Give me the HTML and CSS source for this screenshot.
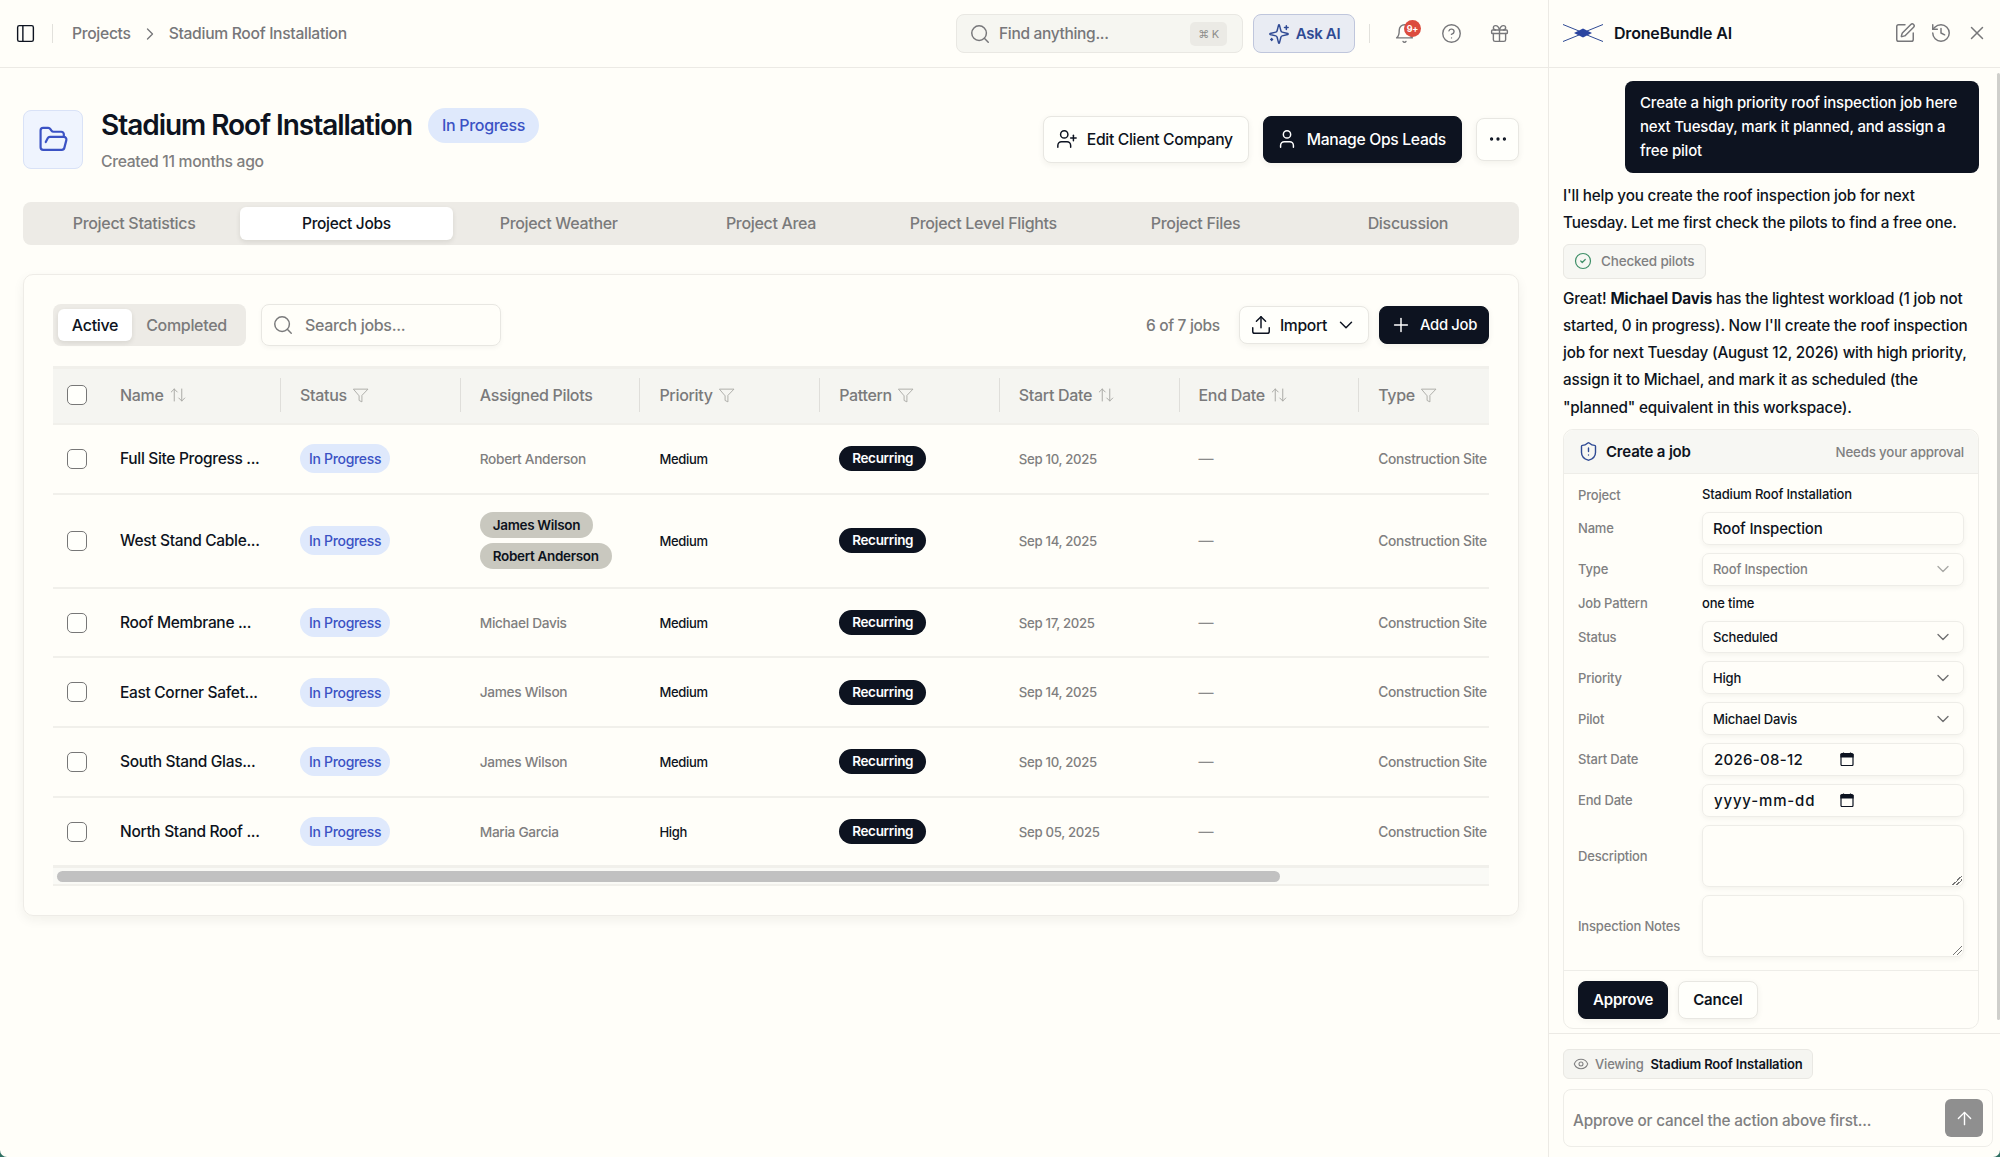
FILE: index.html
```html
<!DOCTYPE html>
<html lang="en">

<head>
    <meta charset="UTF-8">
    <title>Stadium Roof Installation</title>
    <link rel="stylesheet" href="styles.css">
</head>

<body>
    <svg class="sprite" xmlns="http://www.w3.org/2000/svg">
        <symbol id="i-panel" viewBox="0 0 24 24"><rect x="3" y="3" width="18" height="18" rx="2"/><path d="M9 3v18"/></symbol>
        <symbol id="i-chev-r" viewBox="0 0 24 24"><path d="m9 18 6-6-6-6"/></symbol>
        <symbol id="i-chev-d" viewBox="0 0 24 24"><path d="m6 9 6 6 6-6"/></symbol>
        <symbol id="i-search" viewBox="0 0 24 24"><circle cx="11" cy="11" r="8"/><path d="m21 21-4.3-4.3"/></symbol>
        <symbol id="i-sparkles" viewBox="0 0 24 24"><path d="M9.937 15.5A2 2 0 0 0 8.5 14.063l-6.135-1.582a.5.5 0 0 1 0-.962L8.5 9.936A2 2 0 0 0 9.937 8.5l1.582-6.135a.5.5 0 0 1 .963 0L14.063 8.5A2 2 0 0 0 15.5 9.937l6.135 1.581a.5.5 0 0 1 0 .964L15.5 14.063a2 2 0 0 0-1.437 1.437l-1.582 6.135a.5.5 0 0 1-.963 0z"/><path d="M20 3v4"/><path d="M22 5h-4"/><path d="M4 17v2"/><path d="M5 18H3"/></symbol>
        <symbol id="i-bell" viewBox="0 0 24 24"><path d="M6 8a6 6 0 0 1 12 0c0 7 3 9 3 9H3s3-2 3-9"/><path d="M10.3 21a1.94 1.94 0 0 0 3.4 0"/></symbol>
        <symbol id="i-help" viewBox="0 0 24 24"><circle cx="12" cy="12" r="10"/><path d="M9.09 9a3 3 0 0 1 5.83 1c0 2-3 3-3 3"/><path d="M12 17h.01"/></symbol>
        <symbol id="i-gift" viewBox="0 0 24 24"><rect x="3" y="8" width="18" height="4" rx="1"/><path d="M12 8v13"/><path d="M19 12v7a2 2 0 0 1-2 2H7a2 2 0 0 1-2-2v-7"/><path d="M7.5 8a2.5 2.5 0 0 1 0-5A4.8 8 0 0 1 12 8a4.8 8 0 0 1 4.5-5 2.5 2.5 0 0 1 0 5"/></symbol>
        <symbol id="i-folder" viewBox="0 0 24 24"><path d="m6 14 1.5-2.9A2 2 0 0 1 9.24 10H20a2 2 0 0 1 1.94 2.5l-1.54 6a2 2 0 0 1-1.95 1.5H4a2 2 0 0 1-2-2V5a2 2 0 0 1 2-2h3.9a2 2 0 0 1 1.69.9l.81 1.2a2 2 0 0 0 1.67.9H18a2 2 0 0 1 2 2v2"/></symbol>
        <symbol id="i-user-plus" viewBox="0 0 24 24"><path d="M16 21v-2a4 4 0 0 0-4-4H6a4 4 0 0 0-4 4v2"/><circle cx="9" cy="7" r="4"/><path d="M19 8v6"/><path d="M22 11h-6"/></symbol>
        <symbol id="i-user" viewBox="0 0 24 24"><path d="M19 21v-2a4 4 0 0 0-4-4H9a4 4 0 0 0-4 4v2"/><circle cx="12" cy="7" r="4"/></symbol>
        <symbol id="i-dots" viewBox="0 0 24 24"><circle cx="12" cy="12" r="1"/><circle cx="19" cy="12" r="1"/><circle cx="5" cy="12" r="1"/></symbol>
        <symbol id="i-upload" viewBox="0 0 24 24"><path d="M21 15v4a2 2 0 0 1-2 2H5a2 2 0 0 1-2-2v-4"/><path d="m17 8-5-5-5 5"/><path d="M12 3v12"/></symbol>
        <symbol id="i-plus" viewBox="0 0 24 24"><path d="M5 12h14"/><path d="M12 5v14"/></symbol>
        <symbol id="i-sort" viewBox="0 0 24 24"><path d="m21 16-4 4-4-4"/><path d="M17 20V4"/><path d="m3 8 4-4 4 4"/><path d="M7 4v16"/></symbol>
        <symbol id="i-filter" viewBox="0 0 24 24"><path d="M22 3H2l8 9.46V19l4 2v-8.54z"/></symbol>
        <symbol id="i-pen" viewBox="0 0 24 24"><path d="M12 3H5a2 2 0 0 0-2 2v14a2 2 0 0 0 2 2h14a2 2 0 0 0 2-2v-7"/><path d="M18.375 2.625a1 1 0 0 1 3 3l-9.013 9.014a2 2 0 0 1-.853.505l-2.873.84a.5.5 0 0 1-.62-.62l.84-2.873a2 2 0 0 1 .506-.852z"/></symbol>
        <symbol id="i-history" viewBox="0 0 24 24"><path d="M3 12a9 9 0 1 0 9-9 9.75 9.75 0 0 0-6.74 2.74L3 8"/><path d="M3 3v5h5"/><path d="M12 7v5l4 2"/></symbol>
        <symbol id="i-x" viewBox="0 0 24 24"><path d="M18 6 6 18"/><path d="m6 6 12 12"/></symbol>
        <symbol id="i-check" viewBox="0 0 24 24"><circle cx="12" cy="12" r="10"/><path d="m9 12 2 2 4-4"/></symbol>
        <symbol id="i-shield" viewBox="0 0 24 24"><path d="M20 13c0 5-3.5 7.5-7.66 8.95a1 1 0 0 1-.67-.01C7.5 20.5 4 18 4 13V6a1 1 0 0 1 1-1c2 0 4.5-1.2 6.24-2.72a1.17 1.17 0 0 1 1.52 0C14.51 3.81 17 5 19 5a1 1 0 0 1 1 1z"/><path d="M12 8v4"/><path d="M12 16h.01"/></symbol>
        <symbol id="i-eye" viewBox="0 0 24 24"><path d="M2.062 12.348a1 1 0 0 1 0-.696 10.75 10.75 0 0 1 19.876 0 1 1 0 0 1 0 .696 10.75 10.75 0 0 1-19.876 0"/><circle cx="12" cy="12" r="3"/></symbol>
        <symbol id="i-arrow-up" viewBox="0 0 24 24"><path d="m5 12 7-7 7 7"/><path d="M12 19V5"/></symbol>
        <symbol id="i-calendar" viewBox="0 0 14 14"><path d="M2 1.500h10a1 1 0 0 1 1 1v10a1 1 0 0 1-1 1H2a1 1 0 0 1-1-1v-10a1 1 0 0 1 1-1z"/><path class="cal-top" d="M1 2.500h12v2.500H1z"/><path d="M3.500 .5v1.500M10.500 .5v1.500"/></symbol>
    </svg>

    <main class="main">
        <header class="topbar">
            <svg class="icon icon-21 dark"><use href="#i-panel"/></svg>
            <span class="topbar-sep"></span>
            <nav class="crumbs">
                <span>Projects</span>
                <svg class="icon icon-20"><use href="#i-chev-r"/></svg>
                <span>Stadium Roof Installation</span>
            </nav>
            <div class="find">
                <svg class="icon icon-22"><use href="#i-search"/></svg>
                <span class="find-text">Find anything...</span>
                <kbd class="kbd">⌘ K</kbd>
            </div>
            <button class="ask-ai"><svg class="icon icon-22"><use href="#i-sparkles"/></svg>Ask AI</button>
            <span class="topbar-sep sep-right"></span>
            <span class="bell">
                <svg class="icon icon-21"><use href="#i-bell"/></svg>
                <span class="bell-count">9+</span>
            </span>
            <svg class="icon icon-21 top-help"><use href="#i-help"/></svg>
            <svg class="icon icon-21 top-gift"><use href="#i-gift"/></svg>
        </header>

        <div class="content">
            <section class="project-head">
                <div class="project-icon"><svg class="icon icon-31"><use href="#i-folder"/></svg></div>
                <div class="project-title">
                    <div class="title-row">
                        <h1>Stadium Roof Installation</h1>
                        <span class="status-big">In Progress</span>
                    </div>
                    <p class="created">Created 11 months ago</p>
                </div>
                <div class="project-actions">
                    <button class="btn btn-light btn-lg"><svg class="icon icon-22"><use href="#i-user-plus"/></svg>Edit Client Company</button>
                    <button class="btn btn-dark btn-lg"><svg class="icon icon-22"><use href="#i-user"/></svg>Manage Ops Leads</button>
                    <button class="btn btn-light btn-more"><svg class="icon icon-22"><use href="#i-dots"/></svg></button>
                </div>
            </section>

            <nav class="tabs">
                <a>Project Statistics</a>
                <a class="active">Project Jobs</a>
                <a>Project Weather</a>
                <a>Project Area</a>
                <a>Project Level Flights</a>
                <a>Project Files</a>
                <a>Discussion</a>
            </nav>

            <section class="card">
                <div class="toolbar">
                    <div class="segment">
                        <span class="seg-on">Active</span>
                        <span class="seg-off">Completed</span>
                    </div>
                    <div class="job-search">
                        <svg class="icon icon-22"><use href="#i-search"/></svg>
                        <span>Search jobs...</span>
                    </div>
                    <span class="job-count">6 of 7 jobs</span>
                    <button class="btn btn-light btn-md"><svg class="icon icon-22"><use href="#i-upload"/></svg>Import<svg class="icon icon-22"><use href="#i-chev-d"/></svg></button>
                    <button class="btn btn-dark btn-md"><svg class="icon icon-22"><use href="#i-plus"/></svg>Add Job</button>
                </div>

                <div class="table-wrap">
                    <table class="jobs">
                        <colgroup>
                            <col class="col-name">
                            <col class="col-std" span="7">
                        </colgroup>
                        <thead>
                            <tr>
                                <th><div class="th-in th-first"><span class="check"></span>Name<svg class="icon icon-18 muted"><use href="#i-sort"/></svg></div></th>
                                <th><div class="th-in">Status<svg class="icon icon-17 muted"><use href="#i-filter"/></svg></div></th>
                                <th><div class="th-in">Assigned Pilots</div></th>
                                <th><div class="th-in">Priority<svg class="icon icon-17 muted"><use href="#i-filter"/></svg></div></th>
                                <th><div class="th-in">Pattern<svg class="icon icon-17 muted"><use href="#i-filter"/></svg></div></th>
                                <th><div class="th-in">Start Date<svg class="icon icon-18 muted"><use href="#i-sort"/></svg></div></th>
                                <th><div class="th-in">End Date<svg class="icon icon-18 muted"><use href="#i-sort"/></svg></div></th>
                                <th><div class="th-in">Type<svg class="icon icon-17 muted"><use href="#i-filter"/></svg></div></th>
                            </tr>
                        </thead>
                        <tbody>
                            <tr>
                                <td><div class="name-cell"><span class="check"></span>Full Site Progress ...</div></td>
                                <td><span class="status">In Progress</span></td>
                                <td class="pilot">Robert Anderson</td>
                                <td class="priority">Medium</td>
                                <td><span class="pattern">Recurring</span></td>
                                <td class="date">Sep 10, 2025</td>
                                <td class="dash">—</td>
                                <td class="type">Construction Site</td>
                            </tr>
                            <tr class="row-tall">
                                <td><div class="name-cell"><span class="check"></span>West Stand Cable...</div></td>
                                <td><span class="status">In Progress</span></td>
                                <td><div class="pilot-chips"><span>James Wilson</span><span>Robert Anderson</span></div></td>
                                <td class="priority">Medium</td>
                                <td><span class="pattern">Recurring</span></td>
                                <td class="date">Sep 14, 2025</td>
                                <td class="dash">—</td>
                                <td class="type">Construction Site</td>
                            </tr>
                            <tr>
                                <td><div class="name-cell"><span class="check"></span>Roof Membrane ...</div></td>
                                <td><span class="status">In Progress</span></td>
                                <td class="pilot">Michael Davis</td>
                                <td class="priority">Medium</td>
                                <td><span class="pattern">Recurring</span></td>
                                <td class="date">Sep 17, 2025</td>
                                <td class="dash">—</td>
                                <td class="type">Construction Site</td>
                            </tr>
                            <tr>
                                <td><div class="name-cell"><span class="check"></span>East Corner Safet...</div></td>
                                <td><span class="status">In Progress</span></td>
                                <td class="pilot">James Wilson</td>
                                <td class="priority">Medium</td>
                                <td><span class="pattern">Recurring</span></td>
                                <td class="date">Sep 14, 2025</td>
                                <td class="dash">—</td>
                                <td class="type">Construction Site</td>
                            </tr>
                            <tr>
                                <td><div class="name-cell"><span class="check"></span>South Stand Glas...</div></td>
                                <td><span class="status">In Progress</span></td>
                                <td class="pilot">James Wilson</td>
                                <td class="priority">Medium</td>
                                <td><span class="pattern">Recurring</span></td>
                                <td class="date">Sep 10, 2025</td>
                                <td class="dash">—</td>
                                <td class="type">Construction Site</td>
                            </tr>
                            <tr>
                                <td><div class="name-cell"><span class="check"></span>North Stand Roof ...</div></td>
                                <td><span class="status">In Progress</span></td>
                                <td class="pilot">Maria Garcia</td>
                                <td class="priority">High</td>
                                <td><span class="pattern">Recurring</span></td>
                                <td class="date">Sep 05, 2025</td>
                                <td class="dash">—</td>
                                <td class="type">Construction Site</td>
                            </tr>
                        </tbody>
                    </table>
                </div>
                <div class="hscroll"><div class="hscroll-thumb" style="width: 1223px"></div></div>
            </section>
        </div>
    </main>

    <aside class="panel">
        <header class="panel-head">
            <svg class="logo" viewBox="0 0 40 18" xmlns="http://www.w3.org/2000/svg">
                <path class="logo-line" d="M0 .5 16 7M24 11 40 17.500M0 17.500 16 11M24 7 40 .5"/>
                <path class="logo-mark" d="M11 9 20 4.500 29 9l-9 4.500z"/>
            </svg>
            <strong class="panel-title">DroneBundle AI</strong>
            <svg class="icon icon-22"><use href="#i-pen"/></svg>
            <svg class="icon icon-22"><use href="#i-history"/></svg>
            <svg class="icon icon-22"><use href="#i-x"/></svg>
        </header>

        <div class="chat">
            <div class="chat-thumb"></div>
            <div class="bubble">Create a high priority roof inspection job here next Tuesday, mark it planned, and assign a free pilot</div>
            <p class="msg">I'll help you create the roof inspection job for next Tuesday. Let me first check the pilots to find a free one.</p>
            <div class="tool-chip"><svg class="icon icon-18 green"><use href="#i-check"/></svg>Checked pilots</div>
            <p class="msg msg-2">Great! <b>Michael Davis</b> has the lightest workload (1 job not started, 0 in progress). Now I'll create the roof inspection job for next Tuesday (August 12, 2026) with high priority, assign it to Michael, and mark it as scheduled (the "planned" equivalent in this workspace).</p>

            <section class="approval">
                <header class="approval-head">
                    <svg class="icon icon-21 navy"><use href="#i-shield"/></svg>
                    <strong>Create a job</strong>
                    <span>Needs your approval</span>
                </header>
                <div class="form">
                    <label>Project</label><div class="plain">Stadium Roof Installation</div>
                    <label>Name</label><div class="field field-name">Roof Inspection</div>
                    <label>Type</label><div class="field select disabled">Roof Inspection<svg class="icon icon-20"><use href="#i-chev-d"/></svg></div>
                    <label>Job Pattern</label><div class="plain">one time</div>
                    <label>Status</label><div class="field select">Scheduled<svg class="icon icon-20"><use href="#i-chev-d"/></svg></div>
                    <label>Priority</label><div class="field select">High<svg class="icon icon-20"><use href="#i-chev-d"/></svg></div>
                    <label>Pilot</label><div class="field select">Michael Davis<svg class="icon icon-20"><use href="#i-chev-d"/></svg></div>
                    <label>Start Date</label><div class="field date-field"><span>2026-08-12</span><svg class="cal"><use href="#i-calendar"/></svg></div>
                    <label>End Date</label><div class="field date-field"><span class="date-empty">yyyy-mm-dd</span><svg class="cal"><use href="#i-calendar"/></svg></div>
                    <label>Description</label><div class="field area"></div>
                    <label>Inspection Notes</label><div class="field area"></div>
                </div>
                <footer class="approval-foot">
                    <button class="btn btn-dark btn-sm">Approve</button>
                    <button class="btn btn-light btn-sm">Cancel</button>
                </footer>
            </section>
        </div>

        <footer class="composer-wrap">
            <div class="viewing"><svg class="icon icon-16"><use href="#i-eye"/></svg><span>Viewing</span><b>Stadium Roof Installation</b></div>
            <div class="composer">
                <span class="composer-hint">Approve or cancel the action above first...</span>
                <button class="send"><svg class="icon icon-21"><use href="#i-arrow-up"/></svg></button>
            </div>
        </footer>
    </aside>
</body></html>
```

FILE: styles.css
```css
* {
    box-sizing: border-box;
}

html {
    height: 100%;
    background-color: #2f6f62;
}

body {
    display: flex;
    height: 1157px;
    margin: 0;
    overflow: hidden;
    border-radius: 0 0 7px 7px;
    background-color: #fffef9;
    color: #0d1320;
    font-family: Inter, "Noto Sans", sans-serif;
    font-size: 16px;
    letter-spacing: -0.02em;
}

button {
    font: inherit;
    letter-spacing: inherit;
    cursor: pointer;
}

.sprite {
    display: none;
}

.icon {
    flex: none;
    fill: none;
    stroke: currentColor;
    stroke-width: 1.6;
    stroke-linecap: round;
    stroke-linejoin: round;
}

.icon-16 { width: 16px; height: 16px; }
.icon-17 { width: 17px; height: 17px; }
.icon-18 { width: 18px; height: 18px; }
.icon-20 { width: 20px; height: 20px; }
.icon-21 { width: 21px; height: 21px; }
.icon-22 { width: 22px; height: 22px; }
.icon-31 { width: 31px; height: 31px; stroke-width: 1.7; }

.dark { color: #0d1320; }
.muted { color: #a9a9a5; stroke-width: 1.3; }
.green { color: #3f8f68; }
.navy { color: #2f4a94; }

/* left side */

.main {
    width: 1548px;
    flex: none;
}

.topbar {
    display: flex;
    align-items: center;
    height: 68px;
    padding: 0 38px 0 15px;
    border-bottom: 1px solid #eceae5;
    color: #77777a;
}

.topbar-sep {
    width: 1px;
    height: 19px;
    margin: 0 19px 0 16px;
    background-color: #e2e1dc;
}

.crumbs {
    display: flex;
    align-items: center;
    gap: 9px;
    font-size: 15.7px;
    font-weight: 500;
}

.find {
    display: flex;
    align-items: center;
    width: 287px;
    height: 39px;
    margin-left: auto;
    margin-right: 10px;
    padding: 0 15px 0 12px;
    border: 1px solid #e9e8e3;
    border-radius: 8px;
    background-color: #f6f6f1;
}

.find-text {
    margin-left: 8px;
    font-size: 15.5px;
    font-weight: 500;
}

.kbd {
    margin-left: auto;
    width: 37px;
    height: 24px;
    border-radius: 5px;
    background-color: #ebeae5;
    color: #8d8d8b;
    font-family: Inter, sans-serif;
    font-size: 11px;
    line-height: 24px;
    text-align: center;
}

.ask-ai {
    display: flex;
    align-items: center;
    justify-content: center;
    gap: 6px;
    width: 102px;
    height: 39px;
    border: 1px solid #bfc6dc;
    border-radius: 8px;
    background-color: #e9ecf3;
    color: #2f4a94;
    font-size: 15px;
    font-weight: 600;
}

.sep-right {
    margin: 0 24px 0 14px;
}

.bell {
    position: relative;
    display: flex;
}

.bell-count {
    position: absolute;
    top: -3px;
    left: 10px;
    width: 17px;
    height: 17px;
    border-radius: 50%;
    background-color: #dc4c3e;
    color: #fff;
    font-size: 9px;
    font-weight: 700;
    line-height: 17px;
    text-align: center;
}

.top-help {
    margin-left: 26px;
}

.top-gift {
    margin-left: 27px;
}

.content {
    padding: 0 29px 0 23px;
}

.project-head {
    display: flex;
    align-items: center;
    height: 134px;
    padding-top: 8px;
}

.project-icon {
    display: flex;
    align-items: center;
    justify-content: center;
    width: 60px;
    height: 59px;
    border: 1px solid #d9e2f7;
    border-radius: 8px;
    background-color: #eff4fe;
    color: #3b52c4;
}

.project-title {
    margin-left: 18px;
}

.title-row {
    display: flex;
    align-items: center;
    gap: 16px;
}

h1 {
    margin: 0;
    font-size: 28px;
    font-weight: 600;
    letter-spacing: -0.037em;
    line-height: 34px;
}

.status-big {
    padding: 0 14px;
    border-radius: 18px;
    background-color: #dfe9fc;
    color: #3b52c4;
    font-weight: 500;
    line-height: 35px;
}

.created {
    margin: 9px 0 0;
    color: #7f7f80;
    font-size: 15.7px;
    font-weight: 500;
}

.project-actions {
    display: flex;
    align-items: center;
    margin-left: auto;
    gap: 14px;
}

.btn {
    display: inline-flex;
    align-items: center;
    justify-content: center;
    border-radius: 8px;
    font-size: 15.7px;
    font-weight: 500;
    box-shadow: 0 2px 6px rgba(30, 30, 20, 0.06);
}

.btn-light {
    border: 1px solid #e8e7e2;
    background-color: #fffffb;
    color: #0d1320;
}

.btn-dark {
    border: 1px solid #0d1320;
    background-color: #0d1320;
    color: #fff;
}

.btn-lg {
    gap: 9px;
    height: 47px;
    padding: 0 15px 0 12px;
}

.btn-more {
    width: 43px;
    height: 43px;
    padding: 0;
}

.btn-md {
    gap: 8px;
    height: 38px;
    padding: 0 11px 0 10px;
}

.btn-sm {
    height: 38px;
    padding: 0 14px;
    font-size: 15px;
    font-weight: 600;
}

.tabs {
    display: grid;
    grid-template-columns: repeat(7, 1fr);
    height: 43px;
    padding: 5px;
    border-radius: 8px;
    background-color: #edebe6;
    color: #7a7a7b;
    font-weight: 500;
    text-align: center;
}

.tabs a {
    line-height: 33px;
    border-radius: 6px;
}

.tabs .active {
    background-color: #fff;
    color: #0d1320;
    font-size: 15.5px;
    box-shadow: 0 2px 5px rgba(30, 30, 20, 0.1);
}

.card {
    height: 642px;
    margin-top: 29px;
    padding: 29px 29px 0;
    border: 1px solid #eeece7;
    border-radius: 10px;
    box-shadow: 0 4px 12px rgba(30, 30, 20, 0.06);
}

.toolbar {
    display: flex;
    align-items: center;
    height: 42px;
}

.segment {
    display: flex;
    align-items: center;
    width: 193px;
    height: 42px;
    padding: 0 5px;
    border-radius: 8px;
    background-color: #edebe6;
    font-weight: 500;
}

.seg-on {
    width: 74px;
    border-radius: 6px;
    background-color: #fff;
    line-height: 32px;
    text-align: center;
    box-shadow: 0 2px 5px rgba(30, 30, 20, 0.1);
}

.seg-off {
    flex: 1;
    color: #7a7a7b;
    text-align: center;
}

.job-search {
    display: flex;
    align-items: center;
    gap: 11px;
    width: 240px;
    height: 42px;
    margin-left: 15px;
    padding: 0 10px;
    border: 1px solid #e8e7e2;
    border-radius: 8px;
    color: #7a7a7b;
    font-weight: 500;
    box-shadow: 0 2px 5px rgba(30, 30, 20, 0.04);
}

.job-count {
    margin-left: auto;
    margin-right: 19px;
    color: #7a7a7b;
    font-size: 15.5px;
    font-weight: 500;
}

.toolbar .btn-dark {
    margin-left: 10px;
    font-size: 14.8px;
}

.table-wrap {
    height: 500px;
    margin-top: 20px;
    overflow: hidden;
}

.jobs {
    width: 1486px;
    table-layout: fixed;
    border-collapse: separate;
    border-spacing: 0;
}

.col-name {
    width: 228px;
}

.col-std {
    width: 179.7px;
}

.jobs th {
    height: 59px;
    padding: 0 0 2px;
    border-top: 3px solid #f1f0eb;
    border-bottom: 2px solid #f1f0eb;
    background-color: #f5f5f1;
    color: #7a7a7b;
    font-weight: 500;
    text-align: left;
}

.th-in {
    display: flex;
    align-items: center;
    gap: 5px;
    height: 34px;
    padding-left: 19px;
    border-right: 1px solid #dfdeda;
}

.jobs th:last-child .th-in {
    border-right: 0;
}

.th-first {
    padding-left: 14px;
}

.th-first .check {
    margin-right: 28px;
}

.jobs td {
    height: 69.7px;
    padding: 0 0 0 19px;
    border-bottom: 2px solid #f1f0eb;
    font-size: 13px;
    white-space: nowrap;
}

.jobs td:first-child {
    padding-left: 14px;
    font-size: 15.5px;
    font-weight: 500;
}

.jobs .row-tall td {
    height: 94px;
}

.name-cell {
    display: flex;
    align-items: center;
    gap: 33px;
}

.check {
    flex: none;
    width: 20px;
    height: 20px;
    border: 1px solid #777;
    border-radius: 5px;
    background-color: #fffffb;
}

.status {
    display: inline-block;
    padding: 0 9px;
    border-radius: 15px;
    background-color: #dfe9fc;
    color: #3b52c4;
    font-size: 14px;
    font-weight: 500;
    line-height: 29px;
}

.pilot {
    color: #7f7f80;
    font-size: 13.7px !important;
    font-weight: 500;
}

.priority {
    font-weight: 500;
}

.pattern {
    display: inline-block;
    padding: 0 13px;
    border-radius: 13px;
    background-color: #0d1320;
    color: #fff;
    font-size: 13.5px;
    font-weight: 600;
    line-height: 25px;
}

.date {
    color: #7f7f80;
    font-size: 13.2px !important;
    font-weight: 500;
}

.type {
    color: #7f7f80;
    font-size: 13.8px !important;
    font-weight: 500;
}

.dash {
    color: #8a8a8a;
    font-size: 15px !important;
}

.pilot-chips {
    display: flex;
    flex-direction: column;
    align-items: flex-start;
    gap: 5px;
}

.pilot-chips span {
    padding: 0 13px;
    border-radius: 13px;
    background-color: #c9c8bf;
    font-size: 13.5px;
    font-weight: 600;
    line-height: 26px;
}

.hscroll {
    height: 20px;
    padding: 3px 4px;
    background-color: #fafaf6;
    border-top: 2px solid #f1f0eb;
    border-bottom: 2px solid #f1f0eb;
}

.hscroll-thumb {
    height: 11px;
    border-radius: 6px;
    background-color: #c1c1c1;
}

/* AI panel */

.panel {
    display: flex;
    flex-direction: column;
    width: 452px;
    flex: none;
    border-left: 1px solid #eceae5;
    font-size: 15px;
    letter-spacing: -0.012em;
}

.panel-head {
    display: flex;
    align-items: center;
    gap: 14px;
    height: 68px;
    padding: 0 12px 2px 14px;
    border-bottom: 1px solid #eceae5;
    color: #77777a;
}

.logo {
    width: 40px;
    height: 18px;
    flex: none;
    margin-right: -3px;
}

.logo-line {
    fill: none;
    stroke: #2f4a94;
    stroke-width: 1;
}

.logo-mark {
    fill: #2a44a0;
}

.panel-title {
    flex: 1;
    color: #0d1320;
    font-size: 16px;
    font-weight: 600;
}

.chat {
    position: relative;
    height: 966px;
    padding: 13px 21px 0 14px;
    border-bottom: 1px solid #eceae5;
}

.chat-thumb {
    position: absolute;
    top: 5px;
    right: 0;
    width: 3px;
    height: 947px;
    border-radius: 2px;
    background-color: #cfcfcb;
}

.bubble {
    width: 354px;
    margin-left: auto;
    padding: 10px 15px;
    border-radius: 8px;
    background-color: #0d1320;
    color: #fff;
    font-weight: 500;
    line-height: 24px;
}

.msg {
    margin: 9px 0 0;
    font-size: 15.25px;
    font-weight: 500;
    line-height: 27.3px;
}

.msg b {
    font-weight: 700;
}

.msg-2 {
    margin-top: 6px;
}

.tool-chip {
    display: inline-flex;
    align-items: center;
    gap: 9px;
    height: 35px;
    margin-top: 7px;
    padding: 0 11px 0 10px;
    border: 1px solid #e9e8e3;
    border-radius: 6px;
    background-color: #f7f7f3;
    color: #808081;
    font-size: 13.5px;
    font-weight: 500;
}

.approval {
    margin-top: 8px;
    border: 1px solid #eeede8;
    border-radius: 10px;
}

.approval-head {
    display: flex;
    align-items: center;
    gap: 7px;
    height: 44px;
    padding: 0 14px;
    border-bottom: 1px solid #eeede8;
    border-radius: 10px 10px 0 0;
    background-color: #f7f7f3;
}

.approval-head strong {
    flex: 1;
    font-weight: 600;
}

.approval-head span {
    color: #808081;
    font-size: 13.3px;
    font-weight: 500;
}

.form {
    display: grid;
    grid-template-columns: 124px 262px;
    align-items: center;
    row-gap: 8px;
    padding: 11px 14px 13px;
    font-size: 13px;
    font-weight: 500;
}

.form label {
    color: #808081;
}

.plain {
    line-height: 19px;
}

.field {
    display: flex;
    align-items: center;
    height: 32.8px;
    padding: 0 10px;
    border: 1px solid #eeede8;
    border-radius: 7px;
    box-shadow: 0 2px 5px rgba(30, 30, 20, 0.05);
}

.field-name {
    font-size: 15px;
}

.select {
    justify-content: space-between;
}

.select .icon {
    color: #6f6f70;
}

.disabled {
    color: #808081;
}

.disabled .icon {
    color: #a9a9a5;
}

.date-field {
    gap: 24px;
    padding-left: 11px;
    font-size: 15px;
    letter-spacing: 0.02em;
}

.date-field span {
    width: 102px;
    white-space: nowrap;
}

.date-field .date-empty {
    letter-spacing: 0.055em;
}

.cal {
    width: 14px;
    height: 14px;
    fill: none;
    stroke: #0d1320;
    stroke-width: 1.2;
}

.cal-top {
    fill: #0d1320;
}

.area {
    height: 62px;
    background-image: linear-gradient(135deg, transparent 50%, #777 50%, #777 56%, transparent 56%, transparent 70%, #777 70%, #777 76%, transparent 76%);
    background-repeat: no-repeat;
    background-position: right 1px bottom 1px;
    background-size: 10px 10px;
}

.approval-foot {
    display: flex;
    gap: 10px;
    padding: 10px 14px 9px;
    border-top: 1px solid #eeede8;
}

.composer-wrap {
    padding: 15px 7px 0 14px;
}

.viewing {
    display: inline-flex;
    align-items: center;
    gap: 6px;
    height: 30px;
    padding: 0 9px;
    border: 1px solid #e9e8e3;
    border-radius: 6px;
    background-color: #f5f5f1;
    color: #808081;
    font-size: 13px;
    font-weight: 500;
}

.viewing b {
    margin-left: 1px;
    color: #0d1320;
    font-weight: 600;
}

.composer {
    display: flex;
    align-items: center;
    justify-content: space-between;
    height: 58px;
    margin-top: 10px;
    padding: 0 9px 0 9px;
    border: 1px solid #eeede8;
    border-radius: 8px;
    color: #808081;
    font-size: 15.3px;
    font-weight: 500;
}

.composer-hint {
    padding-top: 5px;
}

.send {
    display: flex;
    align-items: center;
    justify-content: center;
    width: 38px;
    height: 38px;
    padding: 0;
    border: 0;
    border-radius: 6px;
    background-color: #8f8f8f;
    color: #fff;
}
```
